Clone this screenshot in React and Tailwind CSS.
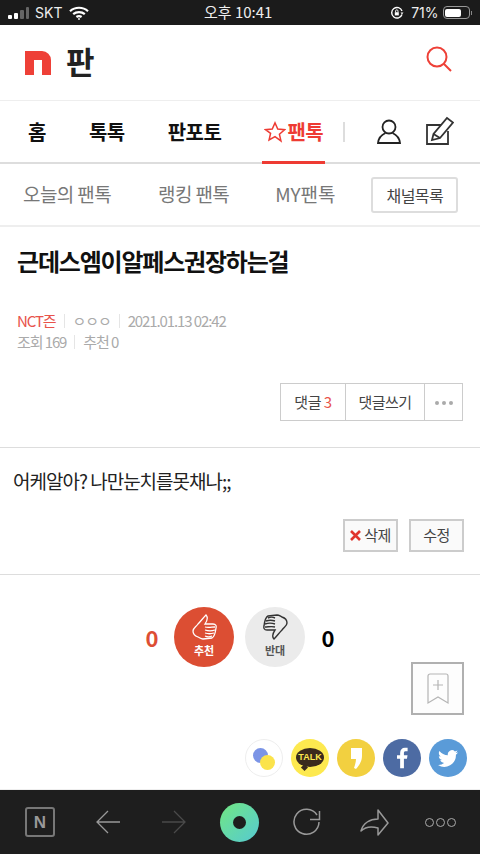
import React from 'react';

const font = { fontFamily: '"Noto Sans CJK KR", "Liberation Sans", sans-serif' };

const StatusBar = () => (
  <div className="h-[25px] bg-[#1b1b1b] flex items-center pl-2 pr-[8px] text-[#eeeeee] text-[15px] relative">
    <div className="flex items-end gap-[2px] h-[12px]">
      <span className="w-[4px] h-[4px] bg-white rounded-[1px]" />
      <span className="w-[4px] h-[6px] bg-white rounded-[1px]" />
      <span className="w-[4px] h-[9px] bg-[#666] rounded-[1px]" />
      <span className="w-[3px] h-[12px] bg-[#666] rounded-[1px]" />
    </div>
    <span className="ml-[6px]" style={{ fontFamily: 'Inter, sans-serif', fontSize: 14 }}>SKT</span>
    <svg width="20" height="14" viewBox="0 0 20 14" className="ml-[7px]" fill="none" stroke="white" strokeWidth="2.2">
      <path d="M1 5.2C6 .6 14 .6 19 5.2" />
      <path d="M4.200 8.200c3.200-2.800 8.400-2.800 11.600 0" />
      <path d="M7.400 11c1.500-1.100 3.700-1.100 5.200 0" />
      <circle cx="10" cy="13" r="0.9" fill="white" stroke="none" />
    </svg>
    <span className="absolute left-[204px] top-[2px] text-[15px] leading-[20px]">오후 10:41</span>
    <div className="ml-auto flex items-center">
      <svg width="14" height="14" viewBox="0 0 14 14" fill="none" stroke="white" strokeWidth="1.4">
        <path d="M12 8.500A5.300 5.300 0 1 1 12 5" />
        <path d="M10.500 6.500h3L12 8.500z" fill="white" stroke="none" />
        <rect x="4.800" y="6.200" width="4" height="3.200" fill="white" stroke="none" />
        <path d="M5.600 6.200V5a1.200 1.200 0 0 1 2.400 0v1.200" strokeWidth="0.9" />
      </svg>
      <span className="ml-[7px]" style={{ fontFamily: 'Inter, sans-serif', fontSize: 14 }}>71%</span>
      <div className="ml-[4px] w-[27px] h-[13px] border border-[#999] rounded-[4px] p-[1.500px]">
        <div className="w-[72%] h-full bg-white rounded-[2px]" />
      </div>
      <span className="w-[1.500px] h-[4px] bg-[#888] ml-[1px]" />
    </div>
  </div>
);

const Header = () => (
  <div className="h-[76px] flex items-center justify-between pl-[25px] pr-[28px] bg-white border-b border-[#eeeeee]">
    <div className="flex items-center">
      <svg width="26" height="24" viewBox="0 0 26 24"><path d="M0 0h17a9 9 0 0 1 9 9v15h-9V9H9v15H0z" fill="#ee4037" /></svg>
      <span className="ml-[15px] mb-[5px] text-[31px] font-bold text-[#222] leading-none">판</span>
    </div>
    <svg width="26" height="26" viewBox="0 0 26 26" className="mb-[8px]" fill="none" stroke="#ee4037" strokeWidth="2"><circle cx="11" cy="11" r="9.500" /><path d="M18 18l7 7" /></svg>
  </div>
);

const Nav = () => (
  <div className="h-[63px] flex items-center bg-white border-b-2 border-[#dddddd] relative text-[20px] font-bold text-[#111] tracking-[-0.5px]">
    <span className="ml-[28px]">홈</span>
    <span className="ml-[43px]">톡톡</span>
    <span className="ml-[43px]">판포토</span>
    <div className="ml-[43px] flex items-center text-[#ee3b33] relative h-full">
      <svg width="22" height="22" viewBox="0 0 24 24" fill="none" stroke="#ee3b33" strokeWidth="1.600"><path d="M12 2l3 6.800 7.400.700-5.600 4.900 1.700 7.300L12 17l-6.500 3.700 1.700-7.300L1.600 9.500 9 8.800z" /></svg>
      <span className="ml-[1px]">팬톡</span>
      <span className="absolute left-[-2px] right-[-2px] bottom-[-2px] h-[3px] bg-[#ee3b33]" />
    </div>
    <span className="ml-[20px] w-[2px] h-[20px] bg-[#dddddd]" />
    <svg width="24" height="25" viewBox="0 0 24 25" className="ml-[32px]" fill="none" stroke="#222" strokeWidth="1.800">
      <circle cx="12" cy="8" r="6.500" />
      <path d="M8.500 14C4 16 1.500 19 1 24h22c-.5-5-3-8-7.500-10" />
    </svg>
    <svg width="28" height="29" viewBox="0 0 28 29" className="ml-[25px] mb-[3px]" fill="none" stroke="#333" strokeWidth="1.800">
      <path d="M15 9H1v19h21V15" />
      <path d="M6 24l1.500-6L21 2l6 4.500-13 15.500z" />
      <path d="M7.500 18L14 22" />
    </svg>
  </div>
);

const SubNav = () => (
  <div className="h-[63px] flex items-center bg-white border-b-2 border-[#eeeeee] text-[19px] text-[#777] tracking-[-0.6px]">
    <span className="ml-[23px]">오늘의 팬톡</span>
    <span className="ml-[47px]">랭킹 팬톡</span>
    <span className="ml-[46px] tracking-[-0.1px]">MY팬톡</span>
    <button className="ml-[36px] w-[87px] h-[36px] border-2 border-[#dddddd] rounded-[3px] text-[16px] text-[#444] tracking-[-0.6px]">채널목록</button>
  </div>
);

const Sep = () => <span className="mx-[8px] w-px h-[14px] bg-[#e5e5e5]" />;

const Article = () => (
  <div className="bg-white border-b border-[#dddddd] h-[221px] pl-[17px] pr-[16px]">
    <h1 className="pt-[14px] text-[24px] leading-[40px] font-bold text-[#111] tracking-[-1.2px]">근데스엠이알페스권장하는걸</h1>
    <div className="mt-[30px] flex items-center text-[15px] leading-[20px] text-[#aaa] tracking-[-1.1px]">
      <span className="text-[#e8534b]">NCT즌</span>
      <Sep />
      <span>ㅇㅇㅇ</span>
      <Sep />
      <span>2021.01.13 02:42</span>
    </div>
    <div className="mt-[1px] flex items-center text-[15px] leading-[20px] text-[#aaa] tracking-[-1.1px]">
      <span>조회 169</span>
      <Sep />
      <span>추천 0</span>
    </div>
    <div className="mt-[31px] flex justify-end">
      <div className="flex h-[38px] mr-[1px] border border-[#cccccc] text-[15px] text-[#444] tracking-[-0.5px]">
        <span className="w-[65px] flex items-center justify-center border-r border-[#cccccc]">댓글&nbsp;<span className="text-[#e8534b]">3</span></span>
        <span className="w-[79px] flex items-center justify-center border-r border-[#cccccc]">댓글쓰기</span>
        <span className="w-[37px] flex items-center justify-center gap-[3px] pt-[2px]">
          <i className="w-[4px] h-[4px] rounded-full bg-[#aaa]" />
          <i className="w-[4px] h-[4px] rounded-full bg-[#aaa]" />
          <i className="w-[4px] h-[4px] rounded-full bg-[#aaa]" />
        </span>
      </div>
    </div>
  </div>
);

const Comment = () => (
  <div className="bg-white border-b border-[#dddddd] h-[127px] px-[13px]">
    <p className="pt-[18px] text-[19px] leading-[30px] text-[#222] tracking-[-1px]">어케알아? 나만눈치를못채나;;</p>
    <div className="mt-[23px] flex justify-end gap-[11px] mr-[3px] text-[15px] text-[#444] tracking-[-0.5px]">
      <button className="w-[55px] h-[33px] border-2 border-[#cccccc] bg-[#fafafa] flex items-center justify-center gap-[3px]">
        <svg width="11" height="11" viewBox="0 0 11 11" stroke="#e0342c" strokeWidth="2.600" fill="none"><path d="M1 1l9 9M10 1l-9 9" /></svg>
        삭제
      </button>
      <button className="w-[55px] h-[33px] border-2 border-[#cccccc] bg-[#fafafa]">수정</button>
    </div>
  </div>
);

const THUMB = 'M14 1c2 2 1 6-1 9h8c3 0 3.500 2 3 4-.5 4-2 9-4 10l-9 1c-2 0-3-1-5-2-3-1-5-3-5-6 0-3 3-4 5-7 3-3 5-6 8-9z';
const FINGERS = 'M13 13c3 1 7 0 10 0M13 16c3 1 7 1 10 0M13 19c3 1 6 1 9 0M13 22c2 1 5 1 7 0';

const ThumbUp = () => (
  <svg width="25" height="26" viewBox="0 0 25 26" fill="none" stroke="white" strokeWidth="1.300">
    <path d={THUMB} />
    <path d={FINGERS} />
  </svg>
);

const ThumbDown = () => (
  <svg width="25" height="26" viewBox="0 0 25 26" fill="none" stroke="#333" strokeWidth="1.400">
    <g transform="rotate(180 12.500 13)">
      <path d={THUMB} />
      <path d={FINGERS} />
    </g>
  </svg>
);

const Votes = () => (
  <div className="bg-white h-[215px] relative border-b border-[#eeeeee]">
    <div className="pt-[32px] flex items-center pl-[145px]">
      <span className="w-[14px] text-[22px] font-bold text-[#dd4e33] text-center leading-none">0</span>
      <button className="ml-[15px] w-[60px] h-[60px] rounded-full bg-[#dc4e33] flex flex-col items-center pt-[7px] text-white text-[11px] font-bold leading-[14px]">
        <ThumbUp />
        <span className="mt-[3px]">추천</span>
      </button>
      <button className="ml-[11px] w-[60px] h-[60px] rounded-full bg-[#ebebeb] flex flex-col items-center pt-[7px] text-[#555] text-[11px] font-bold leading-[14px]">
        <ThumbDown />
        <span className="mt-[3px]">반대</span>
      </button>
      <span className="ml-[16px] w-[14px] text-[22px] font-bold text-black text-center leading-none">0</span>
    </div>
    {/* 떠 있는 북마크 버튼 */}
    <div className="absolute left-[411px] top-[87px] w-[53px] h-[53px] border-2 border-[#b0b0b0] bg-[#fdfdfd] flex items-center justify-center">
      <svg width="22" height="32" viewBox="0 0 22 32" fill="none" stroke="#b5b5b5" strokeWidth="1.200">
        <path d="M1 3a2 2 0 0 1 2-2h16a2 2 0 0 1 2 2v27l-10-6-10 6z" />
        <path d="M11 7v10M6 12h10" />
      </svg>
    </div>
    <div className="absolute right-[13px] top-[164px] flex gap-[8px]">
      <div className="w-[38px] h-[38px] rounded-full bg-white border border-[#eeeeee] relative">
        <span className="absolute left-[7px] top-[8px] w-[15px] h-[15px] rounded-full bg-[#7b94e6]" />
        <span className="absolute left-[14px] top-[15px] w-[15px] h-[15px] rounded-full bg-[#fbe34b]" />
      </div>
      <div className="w-[38px] h-[38px] rounded-full bg-[#fde94f] flex items-center justify-center">
        <div className="w-[28px] h-[19px] rounded-[50%] bg-[#3a2a1d] flex items-center justify-center text-[9px] font-bold text-[#fde94f] leading-none relative mb-[2px]" style={{ fontFamily: '"Liberation Sans", sans-serif' }}>
          TALK
          <span className="absolute left-[6px] bottom-[-3px] w-[5px] h-[5px] bg-[#3a2a1d] rotate-45" />
        </div>
      </div>
      <div className="w-[38px] h-[38px] rounded-full bg-[#f2d040] flex items-center justify-center">
        <svg width="12" height="21" viewBox="0 0 12 21"><path d="M1 0h11v8c0 5-3 10-6 13l-2-1c1-3 2-6 2-9H1z" fill="white" /></svg>
      </div>
      <div className="w-[38px] h-[38px] rounded-full bg-[#4d6ba3] flex items-center justify-center">
        <svg width="11" height="22" viewBox="0 0 14 26"><path d="M4 26V14H0V9.500h4V6.500C4 2.500 6.500 0 10 0h3.500v4.500H11c-1.500 0-2.200.8-2.200 2.200V9.500h4.600l-.7 4.500H8.800v12z" fill="white" /></svg>
      </div>
      <div className="w-[38px] h-[38px] rounded-full bg-[#5a9bd8] flex items-center justify-center">
        <svg width="20" height="17" viewBox="0 0 24 20"><path d="M24 2.400c-.9.400-1.800.700-2.800.800 1-.6 1.800-1.500 2.200-2.700-.9.600-2 1-3.100 1.200A4.900 4.900 0 0 0 11.900 6.200C7.800 6 4.200 4 1.700.9.400 3.200 1 6 3.200 7.500c-.8 0-1.600-.2-2.200-.6 0 2.400 1.700 4.400 3.900 4.900-.7.200-1.500.2-2.200.1.600 2 2.400 3.400 4.600 3.400A9.900 9.900 0 0 1 0 17.800 14 14 0 0 0 21.500 5.400c1-.7 1.800-1.600 2.500-3z" fill="white" /></svg>
      </div>
    </div>
  </div>
);

const BottomBar = () => (
  <div className="h-[64px] bg-[#1e1e1e] flex items-center pl-[25px]">
    <div className="w-[30px] h-[30px] border-2 border-[#777] rounded-[3px] flex items-center justify-center text-[17px] font-bold text-[#999] leading-none" style={{ fontFamily: '"Liberation Sans", sans-serif' }}>N</div>
    <svg width="24" height="24" viewBox="0 0 24 24" className="ml-[41px]" fill="none" stroke="#999" strokeWidth="1.300"><path d="M24 12H1M12 1L1 12l11 11" /></svg>
    <svg width="24" height="24" viewBox="0 0 24 24" className="ml-[42px]" fill="none" stroke="#4a4a4a" strokeWidth="1.300"><path d="M0 12h23M12 1l11 11-11 11" /></svg>
    <div className="ml-[34px] w-[39px] h-[39px] rounded-full bg-gradient-to-br from-[#72e67e] to-[#57c9d0] flex items-center justify-center">
      <span className="w-[13px] h-[13px] rounded-full bg-[#1e1e1e]" />
    </div>
    <svg width="28" height="28" viewBox="0 0 28 28" className="ml-[34px]" fill="none" stroke="#999" strokeWidth="1.500"><path d="M24 7A12.500 12.500 0 1 0 26 14" /><path d="M26.500 3v8.500H17" /></svg>
    <svg width="30" height="27" viewBox="0 0 30 27" className="ml-[38px]" fill="none" stroke="#999" strokeWidth="1.500" strokeLinejoin="round"><path d="M19 1l10 13-10 12v-7c-7-2-13-1-17 3 2-8 9-12 17-12z" /></svg>
    <div className="ml-[36px] flex gap-[2px]">
      <i className="w-[9px] h-[9px] border-[1.500px] border-[#aaaaaa] rounded-full" />
      <i className="w-[9px] h-[9px] border-[1.500px] border-[#aaaaaa] rounded-full" />
      <i className="w-[9px] h-[9px] border-[1.500px] border-[#aaaaaa] rounded-full" />
    </div>
  </div>
);

export default function App() {
  return (
    <div className="w-[480px] h-[854px] overflow-hidden bg-white" style={font}>
      <StatusBar />
      <Header />
      <Nav />
      <SubNav />
      <Article />
      <Comment />
      <Votes />
      <BottomBar />
    </div>
  );
}
